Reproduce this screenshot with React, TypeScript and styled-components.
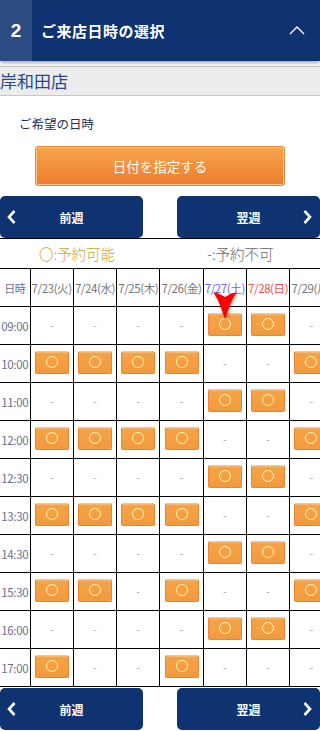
import React from "react";
import styled, { createGlobalStyle } from "styled-components";

const GlobalStyle = createGlobalStyle`
  html, body {
    margin: 0;
    padding: 0;
    background: #fff;
    font-family: "Noto Sans CJK JP", "Noto Sans", sans-serif;
    overflow-x: hidden;
  }
`;

type Day = { label: string; kind?: "sat" | "sun" };

const days: Day[] = [
  { label: "7/23(火)" },
  { label: "7/24(水)" },
  { label: "7/25(木)" },
  { label: "7/26(金)" },
  { label: "7/27(土)", kind: "sat" },
  { label: "7/28(日)", kind: "sun" },
  { label: "7/29(月)" },
];

const weekend = [0, 0, 0, 0, 1, 1, 0];
const weekday = [1, 1, 1, 1, 0, 0, 1];

const rows: { time: string; slots: number[] }[] = [
  { time: "09:00", slots: weekend },
  { time: "10:00", slots: weekday },
  { time: "11:00", slots: weekend },
  { time: "12:00", slots: weekday },
  { time: "12:30", slots: weekend },
  { time: "13:30", slots: weekday },
  { time: "14:30", slots: weekend },
  { time: "15:30", slots: [1, 1, 0, 1, 0, 0, 1] },
  { time: "16:00", slots: weekend },
  { time: "17:00", slots: [1, 0, 0, 1, 0, 0, 0] },
];

const Page = styled.div`
  width: 320px;
  overflow: hidden;
`;

const StepHeader = styled.header`
  display: flex;
  align-items: stretch;
  height: 61px;
  background: #0f3270;
  box-shadow: 0 2px 4px rgba(0, 0, 0, 0.35);
  position: relative;
  z-index: 1;
`;

const StepNumber = styled.div`
  width: 32px;
  display: flex;
  align-items: center;
  justify-content: center;
  background: #2b4c80;
  color: #fff;
  font-size: 19px;
  font-weight: 700;
  font-family: "Liberation Sans", Arial, sans-serif;
`;

const StepTitle = styled.h1`
  flex: 1;
  margin: 0;
  padding-left: 9px;
  display: flex;
  align-items: center;
  color: #fff;
  font-size: 15px;
  font-weight: 700;
  letter-spacing: 0.5px;
`;

const Toggle = styled.div`
  width: 46px;
  display: flex;
  align-items: center;
  justify-content: center;
  padding-bottom: 2px;
`;

const StoreBar = styled.div`
  margin-top: 5px;
  height: 28px;
  background: #ececec;
  border-top: 1px solid #c6c6c6;
  border-bottom: 1px solid #c6c6c6;
  color: #264a8a;
  font-size: 17px;
  line-height: 28px;
`;

const Section = styled.section`
  padding: 19px 0 0;
`;

const Label = styled.p`
  margin: 0 0 0 19px;
  font-size: 12.5px;
  line-height: 18px;
  color: #1b2d5a;
`;

const DateButton = styled.button`
  display: block;
  margin: 13px 0 0 35px;
  width: 250px;
  height: 40px;
  border: 1px solid #ec8a3a;
  border-radius: 3px;
  background: linear-gradient(#f7a54c, #ee7b2f);
  box-shadow: inset 0 0 0 1px #f9c38e;
  color: #fff;
  font-family: inherit;
  font-size: 13.5px;
  padding: 0;
`;

const NavRow = styled.div`
  display: flex;
  justify-content: space-between;
  margin-top: 10px;
`;

const NavButton = styled.button<{ $dir: "prev" | "next" }>`
  position: relative;
  width: 143px;
  height: 42px;
  border: none;
  border-radius: 5px;
  background: #0f3270;
  color: #fff;
  font-family: inherit;
  font-size: 12px;
  font-weight: 700;
  padding: 0;
  display: flex;
  align-items: center;
  justify-content: center;

  svg {
    position: absolute;
    top: 50%;
    transform: translateY(-50%);
    ${({ $dir }) => ($dir === "prev" ? "left: 7px;" : "right: 8px;")}
  }
`;

const TableWrap = styled.div`
  width: 320px;
  overflow: hidden;
`;

const Table = styled.table`
  border-collapse: collapse;
  table-layout: fixed;
  width: 333px;
`;

const LegendCell = styled.td`
  height: 29px;
  border-top: 1px solid #000;
  border-bottom: 1px solid #000;
  padding: 0;
`;

const Legend = styled.div`
  display: flex;
  font-size: 14.5px;
`;

const LegendItem = styled.span<{ $ok?: boolean }>`
  color: ${({ $ok }) => ($ok ? "#c9a633" : "#666")};
  margin-left: ${({ $ok }) => ($ok ? "39px" : "92px")};
  font-weight: 300;
`;

const HeadCell = styled.th<{ $kind?: "sat" | "sun" }>`
  height: 37px;
  border: 1px solid #000;
  padding: 0;
  font-weight: 400;
  font-size: 11.5px;
  white-space: nowrap;
  overflow: visible;
  letter-spacing: -0.4px;
  color: ${({ $kind }) =>
    $kind === "sat" ? "#7563f2" : $kind === "sun" ? "#f24e4e" : "#777"};
`;

const TimeHead = styled(HeadCell)`
  border-left: none;
  color: #6b7092;
  font-size: 11px;
`;

const TimeCell = styled.td`
  height: 37px;
  border: 1px solid #000;
  border-left: none;
  padding: 0;
  text-align: center;
  font-size: 11.5px;
  color: #6b7092;
  white-space: nowrap;
  letter-spacing: -0.3px;
`;

const SlotCell = styled.td`
  position: relative;
  border: 1px solid #000;
  padding: 0;
  text-align: center;
  vertical-align: middle;
  line-height: 1;
`;

const Dash = styled.span`
  display: inline-block;
  color: #9a9a9a;
  font-size: 10px;
  line-height: 10px;
  position: relative;
  top: -4px;
`;

const Slot = styled.button`
  display: inline-flex;
  align-items: center;
  justify-content: center;
  width: 34px;
  height: 23px;
  margin-top: -3px;
  padding: 0;
  border: 1px solid #ee8236;
  border-top-color: #f8c28c;
  border-radius: 2px;
  background: linear-gradient(#f5a448, #f29a3d);
  box-shadow: inset 0 1px 0 #f8b86e;
  vertical-align: middle;
`;

const Ring = styled.span`
  width: 10px;
  height: 10px;
  border: 1.5px solid #fff4b5;
  border-radius: 50%;
`;

const Marker = styled.svg`
  position: absolute;
  left: 50%;
  top: -16px;
  transform: translateX(-50%);
  filter: drop-shadow(1px 2px 1.5px rgba(0, 0, 0, 0.35));
  z-index: 2;
`;

const BottomNav = styled(NavRow)`
  margin-top: 1px;
`;

const ChevronLeft = () => (
  <svg width="9" height="15" viewBox="0 0 9 15">
    <polyline points="7.5,1.5 2,7.5 7.5,13.5" fill="none" stroke="#fff" strokeWidth="2.6" />
  </svg>
);

const ChevronRight = () => (
  <svg width="9" height="15" viewBox="0 0 9 15">
    <polyline points="1.5,1.5 7,7.5 1.5,13.5" fill="none" stroke="#fff" strokeWidth="2.6" />
  </svg>
);

const WeekNav: React.FC<{ as?: any }> = ({ as }) => {
  const Row = as ?? NavRow;
  return (
    <Row>
      <NavButton $dir="prev">
        <ChevronLeft />
        前週
      </NavButton>
      <NavButton $dir="next">
        翌週
        <ChevronRight />
      </NavButton>
    </Row>
  );
};

export default function App() {
  return (
    <Page>
      <GlobalStyle />
      <StepHeader>
        <StepNumber>2</StepNumber>
        <StepTitle>ご来店日時の選択</StepTitle>
        <Toggle>
          <svg width="16" height="10" viewBox="0 0 16 10">
            <polyline points="1,9 8,2 15,9" fill="none" stroke="#fff" strokeWidth="1.4" />
          </svg>
        </Toggle>
      </StepHeader>
      <StoreBar>岸和田店</StoreBar>
      <Section>
        <Label>ご希望の日時</Label>
        <DateButton>日付を指定する</DateButton>
        <WeekNav />
        <TableWrap>
          <Table>
            <colgroup>
              <col style={{ width: 30 }} />
              {days.map((d) => (
                <col key={d.label} style={{ width: 43.3 }} />
              ))}
            </colgroup>
            <tbody>
              <tr>
                <LegendCell colSpan={8}>
                  <Legend>
                    <LegendItem $ok>〇:予約可能</LegendItem>
                    <LegendItem>-:予約不可</LegendItem>
                  </Legend>
                </LegendCell>
              </tr>
              <tr>
                <TimeHead>日時</TimeHead>
                {days.map((d) => (
                  <HeadCell key={d.label} $kind={d.kind}>
                    {d.label}
                  </HeadCell>
                ))}
              </tr>
              {rows.map((r, ri) => (
                <tr key={r.time}>
                  <TimeCell>{r.time}</TimeCell>
                  {r.slots.map((s, i) => (
                    <SlotCell key={i}>
                      {s ? (
                        <Slot>
                          <Ring />
                        </Slot>
                      ) : (
                        <Dash>-</Dash>
                      )}
                      {ri === 0 && i === 4 && (
                        <Marker width="26" height="29" viewBox="0 0 26 29">
                          <path d="M1 1 Q7 2 13 6 Q19 2 25 1 Q20 8 18 14 L13 28 L8 14 Q6 8 1 1 Z" fill="#f00" />
                        </Marker>
                      )}
                    </SlotCell>
                  ))}
                </tr>
              ))}
            </tbody>
          </Table>
        </TableWrap>
        <WeekNav as={BottomNav} />
      </Section>
    </Page>
  );
}
